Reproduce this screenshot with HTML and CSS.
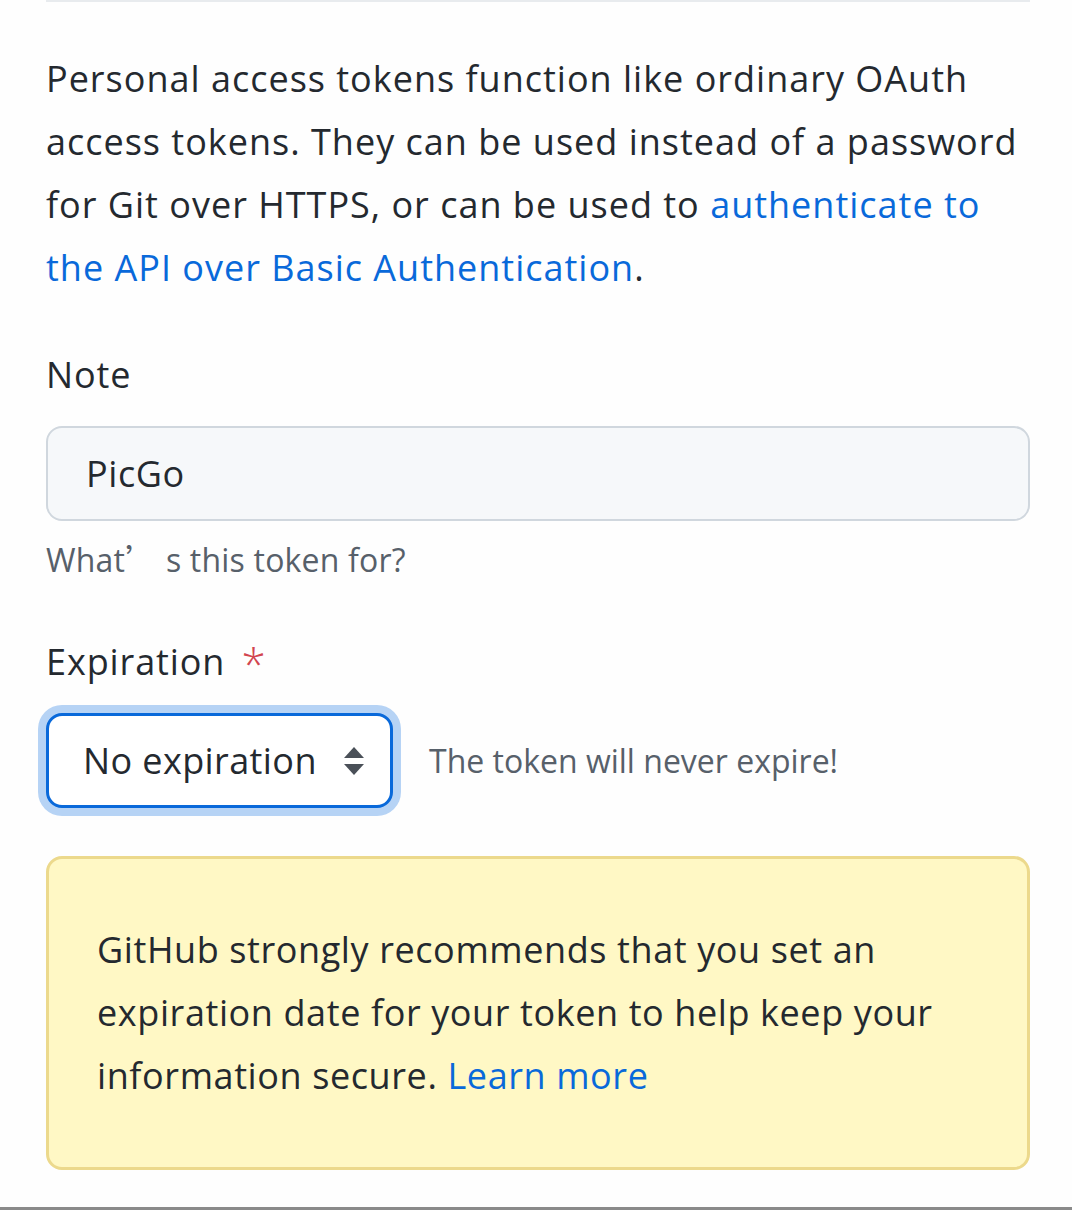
FILE: index.html
```html
<!DOCTYPE html>
<html lang="en">
<head>
<meta charset="utf-8">
<title>Personal access token</title>
<link rel="stylesheet" href="styles.css">
</head>
<body>
<div class="page">
  <div class="top-rule"></div>
  <p class="intro">Personal access tokens function like ordinary OAuth access tokens. They can be used instead of a password for Git over HTTPS, or can be used to <a href="#" class="link">authenticate to the API over Basic Authentication</a>.</p>

  <div class="field">
    <label class="label">Note</label>
    <div class="input">PicGo</div>
    <div class="help">What<span class="cjk">’</span> s this token for?</div>
  </div>

  <div class="field field-exp">
    <label class="label">Expiration <span class="req">*</span></label>
    <div class="exp-row">
      <div class="select-ring">
        <div class="select">
          <span class="select-text">No expiration</span>
          <svg class="arrows" width="22" height="30" viewBox="0 0 22 30"><path d="M11 1 L21 12 L1 12 Z" fill="#4a5058"/><path d="M1 18 L21 18 L11 29 Z" fill="#4a5058"/></svg>
        </div>
      </div>
      <span class="exp-note">The token will never expire!</span>
    </div>
  </div>

  <div class="warning">
    <p>GitHub strongly recommends that you set an expiration date for your token to help keep your information secure. <a href="#" class="link">Learn more</a></p>
  </div>
</div>
<div class="bottom-rule"></div>
</body>
</html>
```
FILE: styles.css
```css
html, body {
  margin: 0;
  padding: 0;
  background: #fefefe;
}
body {
  width: 1072px;
  height: 1210px;
  overflow: hidden;
  position: relative;
  font-family: "Open Sans", "Noto Sans", sans-serif;
  color: #24292f;
}
.page {
  padding: 0 42px 0 46px;
}
.top-rule {
  height: 0;
  border-bottom: 2px solid #e8ebee;
}
.intro {
  margin: 45px 0 0 0;
  font-size: 36px;
  letter-spacing: 1px;
  line-height: 63px;
}
.link {
  color: #0969da;
  text-decoration: none;
}
.field {
  margin-top: 51px;
}
.label {
  display: block;
  font-size: 36px;
  letter-spacing: 0.9px;
  line-height: 50px;
}
.req {
  color: #d2454f;
  margin-left: 6px;
  font-size: 44px;
  font-weight: 300;
  line-height: 40px;
  vertical-align: -6px;
}
.input {
  margin-top: 26px;
  box-sizing: border-box;
  height: 95px;
  border: 2px solid #d0d7de;
  border-radius: 16px;
  background: #f6f8fa;
  padding-left: 38px;
  font-size: 36px;
  letter-spacing: 0.6px;
  line-height: 91px;
}
.help {
  margin-top: 15px;
  font-size: 32px;
  letter-spacing: 0.2px;
  line-height: 44px;
  color: #57606a;
}
.cjk {
  font-family: "Noto Sans CJK SC", sans-serif;
}
.field-exp {
  margin-top: 55px;
}
.exp-row {
  display: flex;
  align-items: center;
  margin-top: 18px;
  margin-left: -8px;
  gap: 28px;
}
.select-ring {
  padding: 8px;
  border-radius: 24px;
  background: #b6d3f5;
}
.select {
  display: flex;
  align-items: center;
  justify-content: space-between;
  box-sizing: border-box;
  width: 347px;
  height: 95px;
  border: 3px solid #0969da;
  border-radius: 16px;
  background: #ffffff;
  padding: 0 25px 0 34px;
}
.select-text {
  font-size: 36px;
  letter-spacing: 0.4px;
  color: #24292f;
}
.arrows {
  display: block;
}
.exp-note {
  font-size: 32px;
  color: #57606a;
}
.warning {
  margin-top: 40px;
  box-sizing: border-box;
  height: 314px;
  border: 3px solid #ecd98c;
  border-radius: 16px;
  background: #fff8c5;
  padding: 59px 36px 0 48px;
}
.warning p {
  margin: 0;
  font-size: 36px;
  letter-spacing: 0.6px;
  line-height: 63px;
}
.bottom-rule {
  position: absolute;
  left: 0;
  right: 0;
  bottom: 0;
  height: 3px;
  background: #8a8a8a;
}
```
